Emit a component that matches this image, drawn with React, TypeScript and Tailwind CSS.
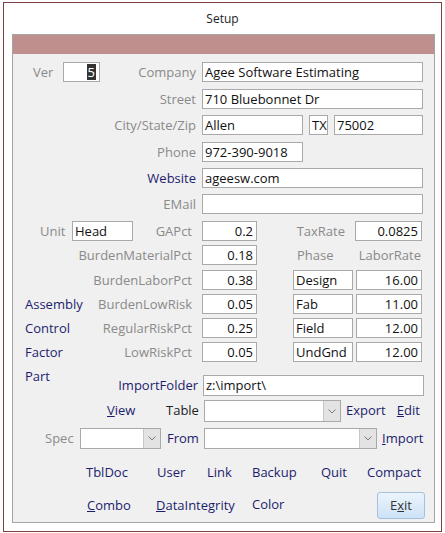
import type { ReactNode } from "react"

const font = { fontFamily: '"Segoe UI", "Open Sans", "Noto Sans", sans-serif' }

function Box({ w, value, right, h = "h-[20px]" }: { w: string; value?: ReactNode; right?: boolean; h?: string }) {
  return (
    <div
      className={`${w} ${h} shrink-0 border border-[#a9a9a9] bg-white flex items-center text-[13px] text-[#111] leading-none ${
        right ? "justify-end pr-[3px]" : "pl-[2px]"
      }`}
    >
      {value}
    </div>
  )
}

function Combo({ w, h }: { w: string; h: string }) {
  return (
    <div className={`${w} ${h} shrink-0 border border-[#a9a9a9] bg-white flex justify-end`}>
      <div className="w-[17px] h-full bg-[#e3e3e3] border-l border-[#c6c6c6] flex items-center justify-center">
        <svg width="8" height="5" viewBox="0 0 8 5">
          <polyline points="0.5,0.5 4,4 7.5,0.5" fill="none" stroke="#7a7a7a" strokeWidth="1" />
        </svg>
      </div>
    </div>
  )
}

const gray = "text-[#8a8a8a]"
const blue = "text-[#1d1d6e]"

export default function App() {
  return (
    <div className="w-[445px] h-[533px] bg-white pt-[2px] pl-[3px]" style={font}>
      <div className="w-[439px] h-[530px] border border-[#7d4040] bg-white">
        {/* Title */}
        <div className="h-[31px] flex items-center justify-center text-[12px] text-[#222]">Setup</div>

        {/* Panel */}
        <div className="ml-[8px] w-[423px] h-[489px] border border-[#a5a5a5] bg-[#f0f0f0] text-[13px]">
          <div className="h-[19px] bg-[#bf8f8e]" />

          <div className="pt-[8px]">
            {/* Ver / Company */}
            <div className="flex items-start h-[27px]">
              <span className={`ml-[20px] w-[30px] leading-[20px] ${gray}`}>Ver</span>
              <Box
                w="w-[37px]"
                right
                value={<span className="bg-[#333] text-white px-[1px] leading-[16px]">5</span>}
              />
              <span className={`w-[102px] text-right pr-[6px] leading-[20px] ${gray}`}>Company</span>
              <Box w="w-[221px]" value="Agee Software Estimating" />
            </div>

            <div className="flex items-start h-[26px]">
              <span className={`w-[189px] text-right pr-[6px] leading-[20px] ${gray}`}>Street</span>
              <Box w="w-[221px]" value="710 Bluebonnet Dr" />
            </div>

            <div className="flex items-start h-[27px]">
              <span className={`w-[189px] text-right pr-[6px] leading-[20px] ${gray}`}>City/State/Zip</span>
              <Box w="w-[101px]" value="Allen" />
              <div className="ml-[6px]">
                <Box w="w-[19px]" value="TX" />
              </div>
              <div className="ml-[6px]">
                <Box w="w-[89px]" value="75002" />
              </div>
            </div>

            <div className="flex items-start h-[26px]">
              <span className={`w-[189px] text-right pr-[6px] leading-[20px] ${gray}`}>Phone</span>
              <Box w="w-[101px]" value="972-390-9018" />
            </div>

            <div className="flex items-start h-[26px]">
              <span className={`w-[189px] text-right pr-[6px] leading-[20px] ${blue}`}>Website</span>
              <Box w="w-[221px]" value="ageesw.com" />
            </div>

            <div className="flex items-start h-[27px]">
              <span className={`w-[189px] text-right pr-[6px] leading-[20px] ${gray}`}>EMail</span>
              <Box w="w-[221px]" />
            </div>

            {/* Unit / GAPct / TaxRate */}
            <div className="flex items-start h-[24px]">
              <span className={`ml-[27px] w-[32px] leading-[20px] ${gray}`}>Unit</span>
              <Box w="w-[61px]" value="Head" />
              <span className={`w-[69px] text-right pr-[10px] leading-[20px] ${gray}`}>GAPct</span>
              <Box w="w-[55px]" right value="0.2" />
              <span className={`w-[98px] text-right pr-[10px] leading-[20px] ${gray}`}>TaxRate</span>
              <Box w="w-[67px]" right value="0.0825" />
            </div>

            <div className="flex items-start h-[25px]">
              <span className={`w-[189px] text-right pr-[10px] leading-[20px] ${gray}`}>BurdenMaterialPct</span>
              <Box w="w-[55px]" right value="0.18" />
              <span className={`w-[98px] pl-[40px] leading-[20px] ${gray}`}>Phase</span>
              <span className={`w-[66px] text-right leading-[20px] ${gray}`}>LaborRate</span>
            </div>

            {[
              ["", "BurdenLaborPct", "0.38", "Design", "16.00"],
              ["Assembly", "BurdenLowRisk", "0.05", "Fab", "11.00"],
              ["Control", "RegularRiskPct", "0.25", "Field", "12.00"],
              ["Factor", "LowRiskPct", "0.05", "UndGnd", "12.00"],
            ].map(([left, label, pct, phase, rate]) => (
              <div key={label} className="flex items-start h-[24px]">
                <div className="w-[189px] flex justify-between pl-[12px] pr-[10px] leading-[20px]">
                  <span className={blue}>{left}</span>
                  <span className={gray}>{label}</span>
                </div>
                <Box w="w-[55px]" right value={pct} />
                <div className="ml-[36px]">
                  <Box w="w-[60px]" value={phase} />
                </div>
                <div className="ml-[3px]">
                  <Box w="w-[66px]" right value={rate} />
                </div>
              </div>
            ))}

            {/* Part / ImportFolder */}
            <div className="flex items-start h-[34px]">
              <div className="w-[190px] flex justify-between items-start pl-[12px] pr-[5px]">
                <span className={`leading-[20px] ${blue}`}>Part</span>
                <span className={`mt-[9px] leading-[20px] ${blue}`}>ImportFolder</span>
              </div>
              <div className="mt-[9px]">
                <Box w="w-[221px]" h="h-[21px]" value="z:\import\" />
              </div>
            </div>

            {/* View / Table */}
            <div className="flex items-center h-[28px] pb-[6px]">
              <span className={`ml-[94px] w-[59px] ${blue}`}>
                <u>V</u>iew
              </span>
              <span className="w-[38px] text-[#222]">Table</span>
              <Combo w="w-[137px]" h="h-[22px]" />
              <span className={`ml-[5px] ${blue}`}>Export</span>
              <span className={`ml-[11px] ${blue}`}>
                <u>E</u>dit
              </span>
            </div>

            {/* Spec / From */}
            <div className="flex items-center h-[35px] pb-[14px]">
              <span className={`ml-[32px] w-[35px] ${gray}`}>Spec</span>
              <Combo w="w-[81px]" h="h-[21px]" />
              <span className={`ml-[6px] w-[37px] ${blue}`}>From</span>
              <Combo w="w-[173px]" h="h-[21px]" />
              <span className={`ml-[5px] ${blue}`}>
                <u>I</u>mport
              </span>
            </div>

            {/* Utility links */}
            <div className={`flex items-center h-[20px] ${blue}`}>
              <span className="ml-[73px] w-[71px]">TblDoc</span>
              <span className="w-[50px]">User</span>
              <span className="w-[45px]">Link</span>
              <span className="w-[69px]">Backup</span>
              <span className="w-[46px]">Quit</span>
              <span>Compact</span>
            </div>

            <div className={`flex items-center h-[27px] mt-[9px] ${blue}`}>
              <span className="ml-[74px] w-[69px]">
                <u>C</u>ombo
              </span>
              <span className="w-[96px]">
                <u>D</u>ataIntegrity
              </span>
              <span className="w-[125px] -mt-[2px]">Color</span>
              <button className="w-[48px] h-[27px] rounded-[3px] border border-[#a3c0de] bg-gradient-to-b from-[#ecf4fc] to-[#cde2f7] text-[#333] text-[13px]">
                E<u>x</u>it
              </button>
            </div>
          </div>
        </div>
      </div>
    </div>
  )
}
